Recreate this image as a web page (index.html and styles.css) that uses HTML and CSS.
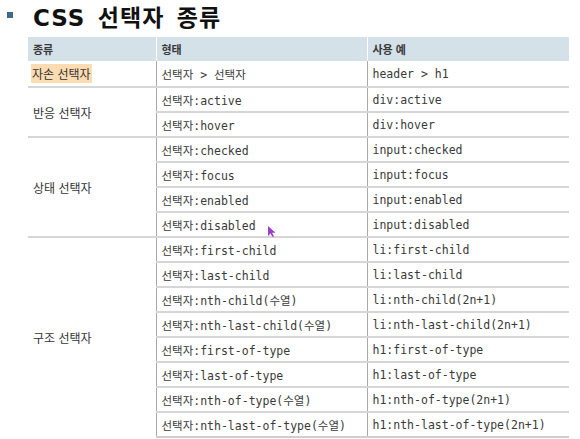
FILE: index.html
```html
<!DOCTYPE html>
<html lang="ko">
<head>
<meta charset="utf-8">
<link rel="stylesheet" href="styles.css">
</head>
<body>
<div class="page">
  <h1 class="title"><span class="bullet"></span><span class="title-text"><span class="latin">CSS</span> 선택자 종류</span></h1>
  <table class="sel-table">
    <colgroup><col class="c1"><col class="c2"><col class="c3"></colgroup>
    <thead>
      <tr><th>종류</th><th>형태</th><th>사용 예</th></tr>
    </thead>
    <tbody>
      <tr class="grp"><td class="kind"><span class="hl">자손 선택자</span></td><td class="code">선택자 &gt; 선택자</td><td class="code">header &gt; h1</td></tr>
      <tr class="grp"><td class="kind" rowspan="2">반응 선택자</td><td class="code">선택자:active</td><td class="code">div:active</td></tr>
      <tr><td class="code">선택자:hover</td><td class="code">div:hover</td></tr>
      <tr class="grp"><td class="kind" rowspan="4">상태 선택자</td><td class="code">선택자:checked</td><td class="code">input:checked</td></tr>
      <tr><td class="code">선택자:focus</td><td class="code">input:focus</td></tr>
      <tr><td class="code">선택자:enabled</td><td class="code">input:enabled</td></tr>
      <tr><td class="code">선택자:disabled</td><td class="code">input:disabled</td></tr>
      <tr class="grp"><td class="kind" rowspan="8">구조 선택자</td><td class="code">선택자:first-child</td><td class="code">li:first-child</td></tr>
      <tr><td class="code">선택자:last-child</td><td class="code">li:last-child</td></tr>
      <tr><td class="code">선택자:nth-child(수열)</td><td class="code">li:nth-child(2n+1)</td></tr>
      <tr><td class="code">선택자:nth-last-child(수열)</td><td class="code">li:nth-last-child(2n+1)</td></tr>
      <tr><td class="code">선택자:first-of-type</td><td class="code">h1:first-of-type</td></tr>
      <tr><td class="code">선택자:last-of-type</td><td class="code">h1:last-of-type</td></tr>
      <tr><td class="code">선택자:nth-of-type(수열)</td><td class="code">h1:nth-of-type(2n+1)</td></tr>
      <tr><td class="code">선택자:nth-last-of-type(수열)</td><td class="code">h1:nth-last-of-type(2n+1)</td></tr>
    </tbody>
  </table>
  <svg class="cursor" width="9" height="13" viewBox="0 0 9 13"><path d="M1 1 L1 11 L3.5 8.5 L5.5 12 L7 11.2 L5 7.8 L8.5 7.8 Z" fill="#9b3fc9"/></svg>
</div>
</body>
</html>
```
FILE: styles.css
```css
html, body {
  margin: 0;
  padding: 0;
  background: #ffffff;
}
.page {
  position: relative;
  width: 580px;
  height: 439px;
  overflow: hidden;
}
.title {
  margin: 0;
  height: 37px;
  box-sizing: border-box;
  padding-top: 1px;
  display: flex;
  align-items: flex-start;
  font-family: "Noto Sans CJK KR", "Noto Sans", sans-serif;
  font-weight: 700;
  font-size: 23px;
  line-height: 31px;
  color: #111;
}
.bullet {
  width: 6px;
  height: 6px;
  background: #3e6a8c;
  margin: 11px 0 0 7px;
  flex: none;
}
.title-text {
  margin-left: 20px;
  letter-spacing: 1px;
  word-spacing: 5px;
}
.latin {
  font-family: "DejaVu Sans", sans-serif;
  letter-spacing: 1px;
}
.sel-table {
  margin-left: 28px;
  width: 541px;
  border-collapse: collapse;
  table-layout: fixed;
}
.c1 { width: 128px; }
.c2 { width: 211px; }
.c3 { width: 202px; }
.sel-table th {
  background: #d4e1e8;
  height: 24px;
  padding: 0 0 0 5px;
  text-align: left;
  font-family: "Noto Sans CJK KR", sans-serif;
  font-weight: 700;
  font-size: 11px;
  color: #3a3a3a;
  border-left: 1px solid #ffffff;
}
.sel-table th:first-child { border-left: none; }
.sel-table td {
  height: 23px;
  padding: 0 0 0 5px;
  border-top: 2px solid #d6d6d6;
  color: #333;
  white-space: nowrap;
  vertical-align: middle;
}
.sel-table tbody tr:first-child td { border-top: none; height: 25px; }
.sel-table tbody tr:last-child td { border-bottom: 2px solid #cfcfcf; }
.sel-table td.kind {
  font-family: "Noto Sans CJK KR", sans-serif;
  font-size: 12px;
  color: #333;
}
.sel-table td.code {
  font-family: "DejaVu Sans Mono", "Noto Sans CJK KR", monospace;
  font-size: 11.5px;
  border-left: 1px solid #a8a8a8;
  color: #3a3a3a;
}
.hl {
  background: #fddcb2;
  padding: 1px 1px;
  margin-left: -2px;
}
.cursor {
  position: absolute;
  left: 267px;
  top: 225px;
}
```
